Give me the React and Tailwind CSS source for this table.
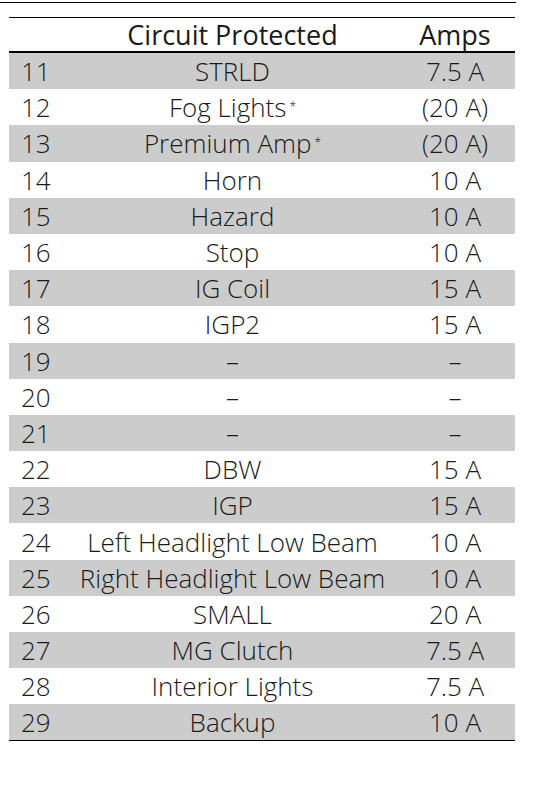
import React from 'react';

const rows = [
  ['11', 'STRLD', '7.5 A'],
  ['12', 'Fog Lights', '(20 A)', true],
  ['13', 'Premium Amp', '(20 A)', true],
  ['14', 'Horn', '10 A'],
  ['15', 'Hazard', '10 A'],
  ['16', 'Stop', '10 A'],
  ['17', 'IG Coil', '15 A'],
  ['18', 'IGP2', '15 A'],
  ['19', '–', '–'],
  ['20', '–', '–'],
  ['21', '–', '–'],
  ['22', 'DBW', '15 A'],
  ['23', 'IGP', '15 A'],
  ['24', 'Left Headlight Low Beam', '10 A'],
  ['25', 'Right Headlight Low Beam', '10 A'],
  ['26', 'SMALL', '20 A'],
  ['27', 'MG Clutch', '7.5 A'],
  ['28', 'Interior Lights', '7.5 A'],
  ['29', 'Backup', '10 A'],
];

export default function App() {
  return (
    <div
      className="w-[552px] h-[786px] bg-white text-[#1a1a1a] text-[26px] leading-none font-[350]"
      style={{ fontFamily: '"Open Sans", "Noto Sans", sans-serif' }}
    >
      <div className="pt-[2px]">
        <div className="w-[516px] h-px bg-black" />
      </div>
      <div className="ml-[9px] w-[506px] mt-[14px] border-t border-black">
        {/* header */}
        <div className="flex items-center h-[35px] border-b-2 border-black font-medium text-[27px]">
          <div className="w-[61px]" />
          <div className="w-[325px] text-center">Circuit Protected</div>
          <div className="flex-1 text-center">Amps</div>
        </div>
        {rows.map(([num, name, amps, star], i) => (
          <div
            key={num}
            className={`flex items-center h-[36.2px] ${i % 2 === 0 ? 'bg-[#cccccc]' : 'bg-white'} ${i === rows.length - 1 ? 'border-b border-black' : ''}`}
          >
            <div className="w-[61px] pl-[12px]">{num}</div>
            <div className="w-[325px] text-center">
              {name}
              {star && <sup className="text-[12px] ml-[3px] relative -top-[6px]">*</sup>}
            </div>
            <div className="flex-1 text-center">{amps}</div>
          </div>
        ))}
      </div>
    </div>
  );
}
